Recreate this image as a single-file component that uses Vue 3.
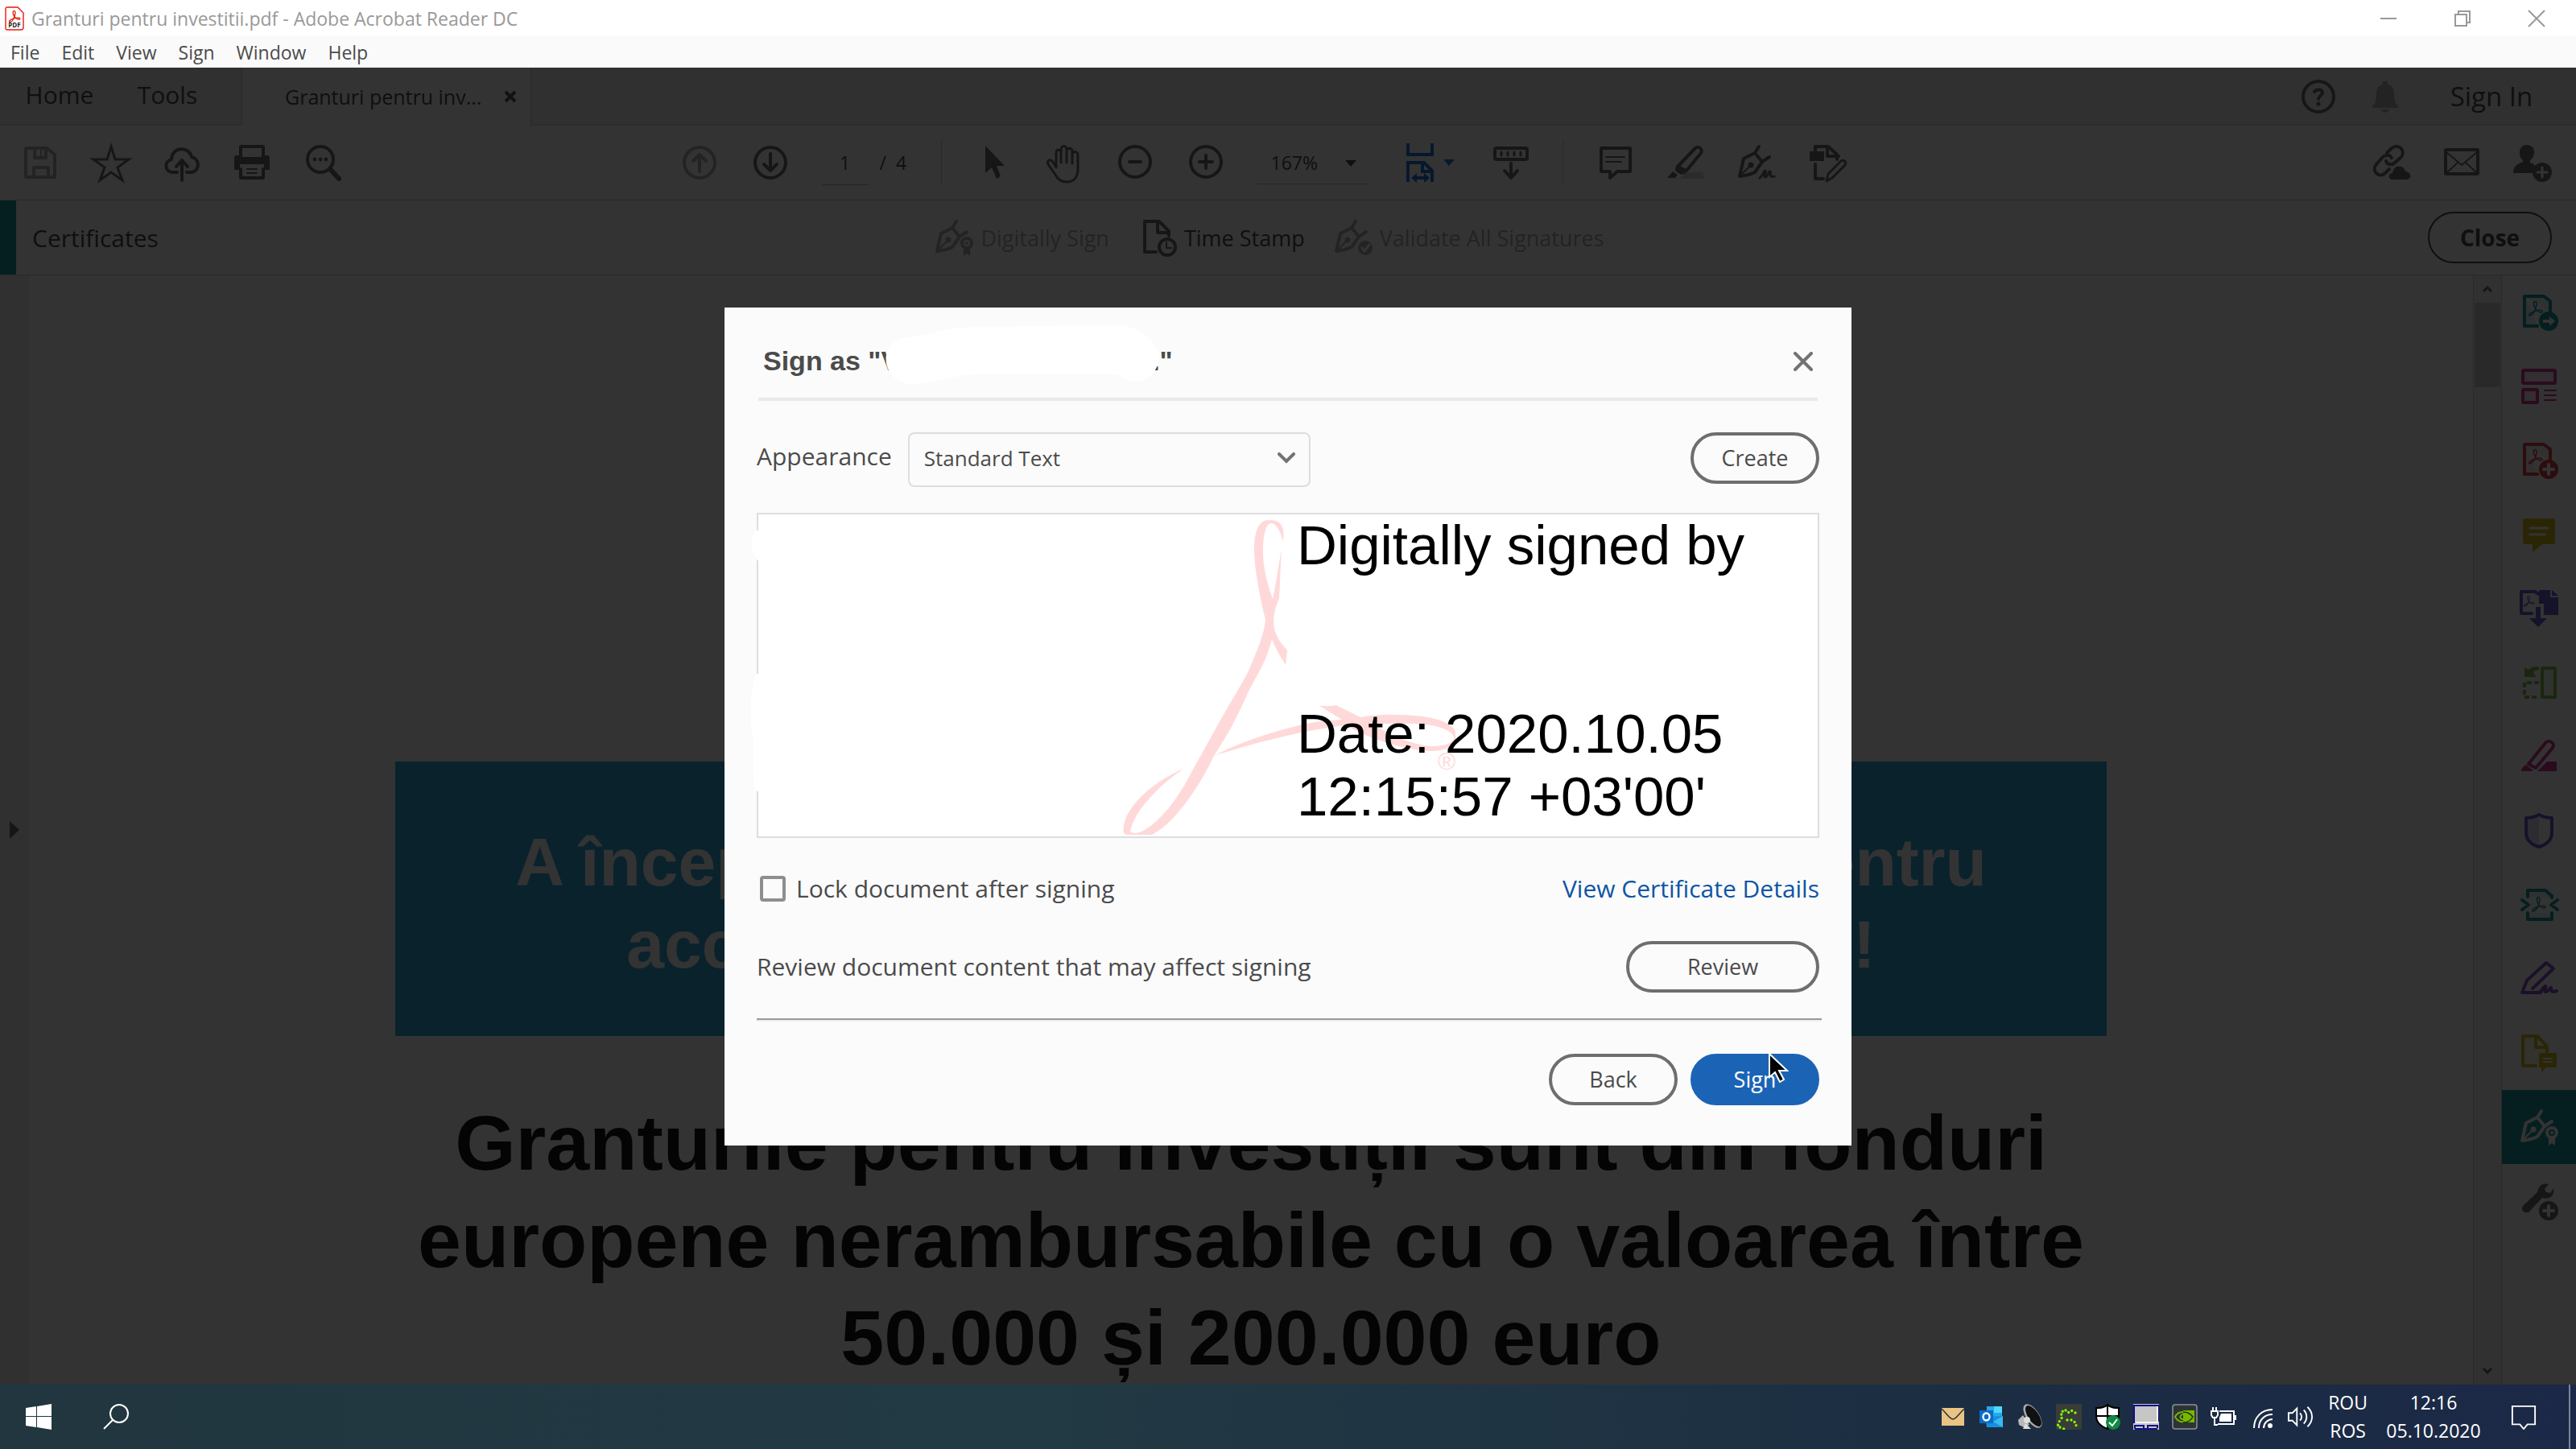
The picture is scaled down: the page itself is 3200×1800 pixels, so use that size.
<!-- PDF reader window with the signing dialog open -->
<template>
  <div class="screen">
    <header class="titlebar">
      <svg class="app-icon" viewBox="0 0 24 30">
        <path d="M3 1h13l7 7v18a3 3 0 0 1-3 3H3a2 2 0 0 1-2-2V3a2 2 0 0 1 2-2z" fill="#fff" stroke="#e8190c" stroke-width="1.4" />
        <path :d="trefoil" transform="translate(5 5) scale(.6)" fill="none" stroke="#e8190c" stroke-width="2.2" />
        <text x="12" y="26" class="pdf-mark">PDF</text>
      </svg>
      <span class="title">Granturi pentru investitii.pdf - Adobe Acrobat Reader DC</span>
      <div class="win-controls">
        <button aria-label="Minimize"><svg viewBox="0 0 22 22"><path d="M1 11h20" /></svg></button>
        <button aria-label="Restore"><svg viewBox="0 0 22 22"><path d="M2 6h14v14H2zM6 6V2h14v14h-4" /></svg></button>
        <button aria-label="Close window"><svg viewBox="0 0 22 22"><path d="M1 1l20 20M21 1L1 21" /></svg></button>
      </div>
    </header>
    <nav class="menubar">
      <button v-for="m in menus" :key="m">{{ m }}</button>
    </nav>

    <main class="app">
      <div class="tabs">
        <button class="nav home">Home</button>
        <button class="nav">Tools</button>
        <div class="tab">
          <span>Granturi pentru inv...</span>
          <button aria-label="Close tab"><svg viewBox="0 0 16 16"><path d="M2 2l12 12M14 2L2 14" /></svg></button>
        </div>
        <div class="account">
          <button aria-label="Help">
            <svg class="ic" viewBox="0 0 48 48">
              <circle cx="24" cy="24" r="19" />
              <path d="M19 18c2-4 10-3 10 1 0 4-5 4-5 8" /><circle class="f" cx="24" cy="33" r="2.6" />
            </svg>
          </button>
          <button class="off" aria-label="Notifications">
            <svg class="ic" viewBox="0 0 48 48">
              <path class="f" d="M21 5h6v4c5 1 8 5 8 10 0 9 1 14 5 16v3H8v-3c4-2 5-7 5-16 0-5 3-9 8-10zM19 40h10c-1 5-9 5-10 0z" />
            </svg>
          </button>
          <button class="nav signin">Sign In</button>
        </div>
      </div>

      <div class="toolbar">
        <div class="group left">
          <button class="off" aria-label="Save">
            <svg class="ic" viewBox="0 0 48 48"><path d="M6 6h26l10 8v28H6zM17 6v12h14V6M16 42V30h18v12" /><path class="thin" d="M25 9v6" /></svg>
          </button>
          <button aria-label="Star">
            <svg class="ic sharp" viewBox="0 0 48 48"><path class="mid" d="M24 4l5 16h17L32 30l6 16-14-10-14 10 6-16L2 20h17z" /></svg>
          </button>
          <button aria-label="Upload">
            <svg class="ic" viewBox="0 0 48 48">
              <path d="M18 36h-6c-10-1-10-14-1-16 0-15 21-18 25-3 10 2 11 17 0 19h-6" /><path d="M24 46V22M17 29l7-8 7 8" />
            </svg>
          </button>
          <button aria-label="Print">
            <svg class="ic" viewBox="0 0 48 48">
              <path d="M9 18V4h28v14M9 32v11h28V32" />
              <path class="f" d="M4 15h4v2h30v-2h4a3 3 0 0 1 3 3v15h-7v-7H8v7H1V18a3 3 0 0 1 3-3z" />
              <path class="thin" d="M17 32h12M17 37h12" />
            </svg>
          </button>
          <button aria-label="Search">
            <svg class="ic" viewBox="0 0 48 48">
              <circle cx="20" cy="20" r="16" /><path class="bold" d="M32 32l11 12" />
              <circle class="f" cx="13" cy="20" r="2.4" /><circle class="f" cx="20" cy="20" r="2.4" /><circle class="f" cx="27" cy="20" r="2.4" />
            </svg>
          </button>
        </div>
        <div class="group center">
          <button class="off" aria-label="Previous page">
            <svg class="ic" viewBox="0 0 48 48"><circle cx="24" cy="24" r="19" /><path d="M24 35V15M16 22l8-8 8 8" /></svg>
          </button>
          <button aria-label="Next page">
            <svg class="ic" viewBox="0 0 48 48"><circle cx="24" cy="24" r="19" /><path d="M24 13v20M16 26l8 8 8-8" /></svg>
          </button>
          <div class="pager">
            <input v-model="page" aria-label="Page number" />
            <span>/&nbsp; 4</span>
          </div>
          <i class="sep"></i>
          <button aria-label="Select">
            <svg class="ic" viewBox="0 0 48 48"><path class="f" d="M14 3l24 25H28l5 13-5 3-6-14-8 7z" /></svg>
          </button>
          <button aria-label="Hand">
            <svg class="ic" viewBox="0 0 48 48">
              <path class="mid" d="M14 30V12c0-5 6-5 6 0v12-16c0-6 7-6 7 0v16-14c0-5 7-5 7 0v15-11c0-5 7-4 7 0v18c0 10-5 16-14 16-7 0-11-3-14-9L4 26c-2-5 3-7 6-3z" />
            </svg>
          </button>
          <button aria-label="Zoom out">
            <svg class="ic" viewBox="0 0 48 48"><circle cx="24" cy="23" r="19" /><path d="M17 23h14" /></svg>
          </button>
          <button aria-label="Zoom in">
            <svg class="ic" viewBox="0 0 48 48"><circle cx="24" cy="23" r="19" /><path d="M16 23h16M24 15v16" /></svg>
          </button>
          <div class="zoom">
            <select aria-label="Zoom level"><option>167%</option></select>
            <svg viewBox="0 0 14 8"><path d="M0 0h14L7 8z" /></svg>
          </div>
          <button class="fit" aria-label="Fit width">
            <svg class="ic sharp" viewBox="0 0 48 48">
              <path d="M8 0v14h30V0M8 48V24h20l10 10v14M26 24v11h12M16 43h14" />
              <path class="f" d="M19 37v12l-7-6zM28 37v12l7-6z" />
            </svg>
            <svg class="caret" viewBox="0 0 14 8"><path d="M0 0h14L7 8z" /></svg>
          </button>
          <button aria-label="Keyboard">
            <svg class="ic" viewBox="0 0 48 48">
              <rect x="4" y="6" width="40" height="14" rx="2" /><path class="mid" d="M12 11v4M20 11v4M28 11v4M36 11v4" />
              <path d="M24 25v17M16 34l8 9 8-9" />
            </svg>
          </button>
          <i class="sep"></i>
          <button aria-label="Comment">
            <svg class="ic" viewBox="0 0 48 48"><path d="M7 6h36v29H27l-9 8v-8H7z" /><path class="thin" d="M13 17h23M13 23h19" /></svg>
          </button>
          <button aria-label="Highlight">
            <svg class="ic" viewBox="0 0 48 48">
              <path class="pale" d="M16 44l8-8h22v8z" />
              <path d="M14 29L35 7c4-5 11 0 8 5L25 34z" /><path class="f" d="M12 27l13 10-7 2-7-5zM2 42l6-7 6 4-3 4H2z" />
            </svg>
          </button>
          <button aria-label="Sign">
            <svg class="ic" viewBox="0 0 48 48">
              <path :d="nib" /><circle class="f" cx="17" cy="27" r="3.5" /><path class="thin" d="M4 40l13-13" />
              <path class="mid" d="M28 43c4-2 5-10 7-9s-3 8 0 8 4-8 6-7-3 8 5 6" />
            </svg>
          </button>
          <button aria-label="Edit">
            <svg class="ic" viewBox="0 0 48 48">
              <path d="M9 10V4h16l11 10v6M24 4v12h14M9 26v18h10" /><path class="f" d="M2 10h18v12H2z" />
              <path class="mid" d="M25 38l16-16c4-2 7 1 5 5L30 43l-7 4z" />
            </svg>
          </button>
        </div>
        <div class="group right">
          <button aria-label="Share link">
            <svg class="ic" viewBox="0 0 48 48">
              <path d="M19 12l6-6c8-6 18 2 12 11l-8 7c-4 4-10 2-11-2" /><path d="M25 18c-2-4-7-4-11-1l-8 9c-7 9 4 18 11 11l5-5" />
              <path class="f" d="M25 45c-5-1-4-8 1-8 1-7 6-10 11-8 3 1 5 4 5 6 8 0 8 9 2 10z" />
            </svg>
          </button>
          <button aria-label="Mail">
            <svg class="ic" viewBox="0 0 48 48"><rect x="4" y="8" width="40" height="30" rx="1" /><path class="thin" d="M5 11l19 16 19-16M5 37l14-13M43 37L29 24" /></svg>
          </button>
          <button aria-label="Add people">
            <svg class="ic" viewBox="0 0 48 48">
              <path class="f" d="M17 2c12 0 11 15 4 19v3c5 2 7 2 6 13H0c0-9 5-11 12-14v-2C6 16 6 2 17 2z" />
              <circle class="f" cx="36" cy="36" r="12" /><path class="inv" d="M30 36h12M36 30v12" />
            </svg>
          </button>
        </div>
      </div>

      <div class="certbar">
        <strong class="cert-title">Certificates</strong>
        <div class="cert-actions">
          <button class="off">
            <svg class="ic" viewBox="0 0 48 48">
              <path :d="nib" /><circle class="f" cx="17" cy="27" r="3.5" /><path class="thin" d="M4 40l13-13" />
              <circle cx="40" cy="31" r="6" /><circle class="f" cx="40" cy="31" r="2" /><path class="f" d="M36 37h8v10l-4-3-4 3z" />
            </svg>
            Digitally Sign
          </button>
          <button>
            <svg class="ic" viewBox="0 0 48 48"><path d="M22 42H8V4h18l12 12v6M24 4v14h14" /><circle cx="36" cy="36" r="10" /><path class="thin" d="M35 30v7h6" /></svg>
            Time Stamp
          </button>
          <button class="off">
            <svg class="ic" viewBox="0 0 48 48">
              <path :d="nib" /><circle class="f" cx="17" cy="27" r="3.5" /><path class="thin" d="M4 40l13-13" />
              <circle class="f" cx="39" cy="37" r="9" /><path class="inv" d="M35 37l3 4 6-8" />
            </svg>
            Validate All Signatures
          </button>
        </div>
        <div class="cert-end"><button class="close-pill">Close</button></div>
      </div>

      <div class="workspace">
        <aside class="rail"><svg viewBox="0 0 12 22"><path d="M0 0l12 11L0 22z" /></svg></aside>
        <article class="document">
          <div class="banner">
            <p class="line wide"><span>A început</span><span>pentru</span></p>
            <p class="line"><span>accesarea</span><span>!</span></p>
          </div>
          <h1>Granturile pentru investiții sunt din fonduri<br />europene nerambursabile cu o valoarea între<br />50.000 și 200.000 euro</h1>
        </article>
        <div class="scroll">
          <svg viewBox="0 0 12 8"><path d="M1 7l5-5 5 5" /></svg>
          <i class="thumb"></i>
          <svg viewBox="0 0 12 8"><path d="M1 1l5 5 5-5" /></svg>
        </div>
        <aside class="tools">
          <button class="teal" aria-label="Export PDF">
            <svg class="ic" viewBox="0 0 48 48">
              <path class="tint" d="M6 4h24l8 6v13M22 41H6V4" /><path class="thin" :d="trefoil" transform="translate(11 10) scale(.75)" />
              <circle class="f" cx="36" cy="35" r="12" /><path class="invf" d="M29 33h8v-4l7 6-7 6v-4h-8z" />
            </svg>
          </button>
          <button class="pink" aria-label="Organize Pages">
            <svg class="ic" viewBox="0 0 48 48">
              <rect class="tint" x="4" y="4" width="40" height="16" rx="1" /><rect class="tint" x="4" y="28" width="18" height="16" rx="1" />
              <path class="thin" d="M31 29h14M31 35h14M31 41h14" />
            </svg>
          </button>
          <button class="red" aria-label="Create PDF">
            <svg class="ic" viewBox="0 0 48 48">
              <path class="tint" d="M6 4h24l8 6v13M22 41H6V4" /><path class="thin" :d="trefoil" transform="translate(11 10) scale(.75)" />
              <circle class="f" cx="36" cy="35" r="12" /><path class="inv wide-inv" d="M30 35h12M36 29v12" />
            </svg>
          </button>
          <button class="yellow" aria-label="Comment tool">
            <svg class="ic" viewBox="0 0 48 48"><path class="f" d="M7 4h34a3 3 0 0 1 3 3v26a3 3 0 0 1-3 3H28l-12 10V36H7a3 3 0 0 1-3-3V7a3 3 0 0 1 3-3z" /><path class="inv" d="M13 16h22M13 24h18" /></svg>
          </button>
          <button class="blue" aria-label="Combine Files">
            <svg class="ic" viewBox="0 0 48 48">
              <path d="M24 6l-5-3H2v27h13" /><path class="thin" :d="trefoil" transform="translate(5 8) scale(.55)" />
              <path class="f" d="M24 1h14v9h10v22H30V18h-6zM40 1l8 7h-8zM20 22h6v14h8L23 47 12 36h8z" />
            </svg>
          </button>
          <button class="green" aria-label="Rotate pages">
            <svg class="ic sharp" viewBox="0 0 48 48">
              <rect class="tint" x="28" y="6" width="16" height="36" rx="1" /><path stroke-dasharray="6 3" d="M24 24H6v18h18" />
              <path class="f" d="M24 4v4c-5 0-7 3-7 3l3 6H6V5l5 3c4-4 8-4 13-4z" />
            </svg>
          </button>
          <button class="pink" aria-label="Redact">
            <svg class="ic" viewBox="0 0 48 48">
              <path d="M11 33L32 7c4-5 13 0 9 6L20 38z" /><path class="f" d="M2 42c0-4 3-6 6-8l9 7-2 1zM22 42l12-12h12v12z" />
            </svg>
          </button>
          <button class="blue" aria-label="Protect">
            <svg class="ic" viewBox="0 0 48 48"><path class="tintf" d="M24 4v40C14 41 8 35 8 26V8z" /><path d="M24 4c5 3 10 4 16 4v18c0 9-6 15-16 18C14 41 8 35 8 26V8c6 0 11-1 16-4z" /></svg>
          </button>
          <button class="teal" aria-label="Compress PDF">
            <svg class="ic" viewBox="0 0 48 48">
              <path class="tint" d="M10 14V6h22l8 7v2M10 34v8h30v-8" /><path class="thin" :d="trefoil" transform="translate(15 14) scale(.75)" />
              <path d="M3 18l8 6-8 6M47 18l-8 6 8 6" />
            </svg>
          </button>
          <button class="violet" aria-label="Fill and Sign">
            <svg class="ic" viewBox="0 0 48 48">
              <path d="M26 41H3l6-15L33 4l9 7-26 25" /><path d="M24 41c5-2 6-9 8-8s-3 8 1 7 5-6 6-5-2 7 7 4" />
            </svg>
          </button>
          <button class="yellow" aria-label="Send for comments">
            <svg class="ic" viewBox="0 0 48 48">
              <path class="tint" d="M20 40H4V3h18l12 13v6M20 3v14h14" /><path class="f" d="M24 24h22v18H33l-6 6v-6h-3z" /><path class="inv slim" d="M30 31h10M30 35h10" />
            </svg>
          </button>
          <button class="active" aria-label="Certificates tool">
            <svg class="ic" viewBox="0 0 48 48">
              <path :d="nib" /><circle class="f" cx="17" cy="27" r="3.5" /><path class="thin" d="M4 40l13-13" />
              <circle cx="40" cy="31" r="6" /><circle class="f" cx="40" cy="31" r="2" /><path class="f" d="M36 37h8v10l-4-3-4 3z" />
            </svg>
          </button>
          <button aria-label="More tools">
            <svg class="ic" viewBox="0 0 48 48">
              <path class="f" d="M22 13c1-9 8-12 14-10l-5 6 2 4 5 1 4-6c2 9-5 15-14 12L14 35c-4 7-14 2-10-5z" />
              <circle class="f" cx="36" cy="36" r="12" /><path class="inv wide-inv" d="M30 36h12M36 30v12" />
            </svg>
          </button>
        </aside>
      </div>

      <div class="overlay">
        <section class="dialog" role="dialog" aria-labelledby="dlg-title">
          <div class="dlg-head">
            <h2 id="dlg-title">
              <span>Sign as "V</span>
              <svg class="smudge" viewBox="0 0 342 73"><path d="M30 15C60 12 70 4 110 2L290 0c20 0 48 18 51 36 2 20-16 34-30 34-12 0-18-9-26-9H110C80 63 60 73 35 73-5 73-12 18 30 15z" /></svg>
              <span>."</span>
            </h2>
            <button aria-label="Close dialog"><svg viewBox="0 0 24 24"><path d="M2 2l20 20M22 2L2 22" /></svg></button>
          </div>
          <div class="row appearance">
            <label for="appearance">Appearance</label>
            <div class="select">
              <select id="appearance" v-model="appearance"><option>Standard Text</option></select>
              <svg viewBox="0 0 22 14"><path d="M2 2l9 9 9-9" /></svg>
            </div>
            <button class="pill push">Create</button>
          </div>
          <div class="preview">
            <svg class="logo" viewBox="0 0 1320 404">
              <g fill="#ffd9d9">
                <path fill-rule="evenodd" d="M652 46C650 80 650 95 649 107C642 120 640 140 645 150C649 160 655 166 659 171L657 189C650 178 644 168 640 157C632 188 622 200 610 224C596 256 586 274 568 302C550 340 520 385 491 400H462C455 400 455 396 456 388C460 365 490 335 530 318C498 340 468 372 464 396C468 399 474 398 478 396C500 385 520 358 532 337L568 272C590 232 602 215 612 194C622 170 630 152 632 133C626 108 618 70 618 46C618 22 624 9 636 9C652 9 656 16 654 36C650 20 644 13 639 13C633 13 629 26 629 48C629 70 635 90 641 107C646 85 648 65 652 46Z" />
                <path fill-rule="evenodd" d="M568 302C600 285 640 272 678 263C695 259 712 258 727 257L698 239C706 241 714 240 720 239L750 254C770 250 800 250 828 253C850 256 866 264 868 272V284C864 292 852 296 838 296C800 294 760 280 732 264C680 270 620 285 568 302ZM764 262C790 278 815 288 838 290C858 290 868 284 866 278C862 268 840 263 820 262Z" />
              </g>
              <text x="846" y="319" class="reg">®</text>
              <path fill="#fff" d="M0 22C-9 32-9 48 2 60h8V22zM0 200c-9 18-9 60-4 84-1 20-1 50 3 62h12V200z" />
            </svg>
            <p class="stamp">Digitally signed by<br /><br /><br />Date: 2020.10.05<br />12:15:57 +03'00'</p>
          </div>
          <div class="row lock">
            <input id="lock" v-model="lockDoc" type="checkbox" />
            <label for="lock">Lock document after signing</label>
            <a class="push" href="#">View Certificate Details</a>
          </div>
          <div class="row review">
            <span>Review document content that may affect signing</span>
            <button class="pill push big">Review</button>
          </div>
          <hr />
          <div class="row actions">
            <button class="pill push">Back</button>
            <button class="pill primary">Sign<svg class="pointer" viewBox="0 0 26 38"><path d="M2 2v29l7-6 6 12 5-3-6-11h10z" /></svg></button>
          </div>
        </section>
      </div>
    </main>

    <footer class="taskbar">
      <button aria-label="Start"><svg viewBox="0 0 32 32"><path fill="#fff" d="M0 5l13-2v12H0zM14 3l18-3v15H14zM0 16h13v13L0 27zM14 16h18v16l-18-3z" /></svg></button>
      <button aria-label="Search Windows"><svg viewBox="0 0 32 32" class="line-ic"><circle cx="20" cy="12" r="11" /><path d="M12 20L1 31" /></svg></button>
      <div class="tray">
        <svg viewBox="0 0 32 32"><path fill="#ebc383" d="M2 5h28v22H2z" /><path d="M2 6c8 8 10 13 14 13S22 14 30 6" fill="none" stroke="#263646" stroke-width="1.5" /></svg>
        <svg viewBox="0 0 32 32">
          <path fill="#28a8ea" d="M10 3h19v22H10z" /><path fill="#50d9ff" d="M19 3h10v8H19z" /><path fill="#1490df" d="M8 16l22-1v14H10z" /><path fill="#3cb8f0" d="M30 15v14L18 22z" />
          <path fill="#0a6cc8" d="M1 8h17v16H1z" /><ellipse cx="9.5" cy="16" rx="4" ry="4.5" fill="none" stroke="#fff" stroke-width="2.4" />
        </svg>
        <svg viewBox="0 0 32 32">
          <path fill="#b8b8b8" d="M1 20l6-6 8 12-7 3-6-3z" /><ellipse cx="19" cy="15" rx="8" ry="17" transform="rotate(-34 19 15)" fill="#aaa" />
          <ellipse cx="20" cy="15" rx="6.5" ry="15" transform="rotate(-34 20 15)" fill="#111" /><circle cx="12" cy="20" r="4" fill="#ddd" /><path fill="#ddd" d="M7 31l3-7 7 7z" />
        </svg>
        <svg viewBox="0 0 32 32"><path fill="#3a3c3a" d="M0 0h32v32H0z" /><path d="M24 11l-5-3-4 3-4-4-5 4 2 5-4 6-2 6 6 2 4 2M14 20h6l5 4v7" fill="none" stroke="#7fff00" stroke-width="3.4" stroke-linecap="round" stroke-dasharray="0 5" /></svg>
        <svg viewBox="0 0 32 32">
          <path d="M16 1c4 4 9 4 14 4v10c0 8-6 13-14 16C8 28 2 23 2 15V5c5 0 10 0 14-4z" fill="#fff" stroke="#000" stroke-width="2" /><path d="M16 2v28M2 15h28" stroke="#000" stroke-width="2" />
          <circle cx="23" cy="23" r="9" fill="#0f8a42" /><path d="M18 23l4 4 6-8" fill="none" stroke="#fff" stroke-width="2" />
        </svg>
        <svg viewBox="0 0 32 32"><path fill="#c6c6c6" d="M0 0h32v32H0z" /><path fill="none" stroke="#10108a" stroke-width="2" d="M1 24V2h30v20M2 31v-4h11v3M18 30v-3h12v3M2 31h28" /><path fill="none" stroke="#f4f4f4" stroke-width="2" d="M30 3v20H3" /></svg>
        <svg viewBox="0 0 32 32">
          <rect x="1" y="1" width="30" height="30" rx="3" fill="#2e3436" stroke="#8c9296" stroke-width="1.5" /><path fill="#76b900" d="M14 8h14v15H14z" />
          <path d="M14 10C8 10 5 14 4 16c3 6 9 8 15 5 3-2 5-4 5-5-3-4-7-5-11-3s-3 6 1 6 5-3 2-4" fill="none" stroke="#76b900" stroke-width="1.8" /><path d="M14 10c5 0 9 2 12 6-2 4-6 7-12 7" fill="none" stroke="#23300a" stroke-width="1.5" />
        </svg>
        <svg viewBox="0 0 32 32" class="line-ic"><path d="M3 4v5M7 4v5M1 9h8v5l-2 3H3l-2-3zM5 17v9h4M11 9h18v16H9M31 14v6" /><path fill="#fff" stroke="none" d="M13 12h13v10H11v-5z" /></svg>
        <svg viewBox="0 0 32 32" class="line-ic"><path d="M6 30C6 17 15 7 29 7M12 30c0-10 7-17 17-17M18 30c0-6 5-11 11-11" /><circle cx="26" cy="27" r="3" fill="#fff" stroke="none" /></svg>
        <svg viewBox="0 0 34 32" class="line-ic"><path d="M1 11h5l6-6v22l-6-6H1zM16 11c3 3 3 7 0 10M21 7c5 5 5 13 0 18M26 3c8 8 8 18 0 26" /></svg>
      </div>
      <div class="lang"><span>ROU</span><span>ROS</span></div>
      <div class="clock"><span>12:16</span><span>05.10.2020</span></div>
      <button class="notes" aria-label="Notifications panel"><svg viewBox="0 0 34 34" class="line-ic"><path d="M2 3h30v24H22l-5 6-5-6H2z" /></svg></button>
      <i class="peek"></i>
    </footer>
  </div>
</template>

<script setup>
import { ref } from 'vue';

const menus = ['File', 'Edit', 'View', 'Sign', 'Window', 'Help'];
const page = ref('1');
const appearance = ref('Standard Text');
const lockDoc = ref(false);

// shapes used by several icons
const trefoil = 'M11 1c4 0 2 8 0 13-2 6-6 10-9 10s0-5 7-7 14-3 14 0-8 2-12-5-3-11 0-11z';
const nib = 'M27 4l-5 8L8 19 3 41c8-1 15-3 19-5l9-13 9-6M22 12l9 11';
</script>

<style>
body {
  margin: 0;
}
</style>

<style scoped>
.screen {
  display: flex;
  flex-direction: column;
  height: 100vh;
  overflow: hidden;
  font-family: "Open Sans", "Noto Sans", sans-serif;
  color: #4b4b4b;
}
button, select, input {
  font: inherit;
  color: inherit;
  background: none;
  border: 0;
  padding: 0;
  margin: 0;
}
button {
  display: flex;
  align-items: center;
  justify-content: center;
  flex: none;
}
svg {
  display: block;
  flex: none;
}
p, h1, h2 {
  margin: 0;
}

/* title and menu */
.titlebar {
  display: flex;
  align-items: center;
  height: 45px;
  padding-left: 6px;
  background: #fff;
  color: #999;
  font-size: 23px;
}
.app-icon {
  width: 24px;
  height: 30px;
  margin-right: 9px;
}
.pdf-mark {
  font: bold 8px "Open Sans", sans-serif;
  text-anchor: middle;
  fill: #222;
}
.win-controls {
  display: flex;
  margin-left: auto;
  padding-right: 3px;
}
.win-controls button {
  width: 92px;
  height: 42px;
}
.win-controls svg {
  width: 22px;
  fill: none;
  stroke: #999;
  stroke-width: 2;
}
.menubar {
  display: flex;
  gap: 27px;
  height: 39px;
  padding-left: 13px;
  background: #fafafa;
  font-size: 23px;
}

/* reader window */
.app {
  position: relative;
  flex: 1;
  min-height: 0;
  display: flex;
  flex-direction: column;
  background: #fff;
}
.ic {
  width: 48px;
  height: 48px;
  fill: none;
  stroke: currentColor;
  stroke-width: 4;
  stroke-linecap: round;
  stroke-linejoin: round;
  overflow: visible;
}
.sharp {
  stroke-linecap: butt;
  stroke-linejoin: miter;
}
.ic .f {
  fill: currentColor;
  stroke: none;
}
.ic .thin {
  stroke-width: 2;
}
.ic .mid {
  stroke-width: 3;
}
.ic .bold {
  stroke-width: 6;
}
.ic .inv {
  stroke: #fff;
  stroke-width: 3;
}
.ic .wide-inv {
  stroke-width: 4;
}
.ic .slim {
  stroke-width: 2;
}
.ic .invf {
  fill: #fff;
  stroke: none;
}
.ic .pale {
  fill: #d8d8d8;
  stroke: none;
}
.ic .tint {
  fill: currentColor;
  fill-opacity: .12;
}
.ic .tintf {
  fill: currentColor;
  fill-opacity: .2;
  stroke: none;
}
.tabs {
  display: flex;
  height: 71px;
  background: #f0f0f0;
  border-bottom: 1px solid #cdcdcd;
}
.nav {
  height: 66px;
  width: 128px;
  font-size: 30px;
}
.home {
  margin-left: 10px;
  margin-right: 6px;
}
.tab {
  display: flex;
  align-items: center;
  justify-content: space-between;
  width: 360px;
  height: 72px;
  margin-left: 28px;
  padding: 0 17px 0 53px;
  box-sizing: border-box;
  background: #fff;
  border: solid #cdcdcd;
  border-width: 0 1px;
  font-size: 25px;
}
.tab svg {
  width: 16px;
  fill: none;
  stroke: #5a5a5a;
  stroke-width: 4;
}
.account {
  display: flex;
  align-items: center;
  gap: 35px;
  margin-left: auto;
  padding-right: 41px;
  color: #6e6e6e;
}
.signin {
  color: #4b4b4b;
  margin-left: 9px;
  font-size: 33px;
}
.off {
  color: #afafaf !important;
}
.toolbar, .certbar {
  display: grid;
  grid-template-columns: 1fr auto 1fr;
  align-items: center;
  height: 92px;
  border-bottom: 1px solid #cdcdcd;
}
.group {
  display: flex;
  align-items: center;
  gap: 40px;
  color: #6e6e6e;
}
.left {
  padding-left: 26px;
}
.center {
  padding-right: 62px;
}
.right {
  justify-content: flex-end;
  padding-right: 30px;
}
.sep {
  width: 1px;
  height: 56px;
  background: #cdcdcd;
}
.pager {
  display: flex;
  align-items: center;
  gap: 14px;
  width: 108px;
  font-size: 23px;
  color: #4b4b4b;
}
.pager span {
  white-space: nowrap;
}
.pager input {
  width: 58px;
  height: 54px;
  text-align: center;
  border-bottom: 1px solid #bbb;
}
.zoom {
  position: relative;
  display: flex;
  width: 139px;
  font-size: 23px;
  color: #4b4b4b;
}
.zoom select {
  appearance: none;
  width: 100%;
  height: 54px;
  padding-left: 17px;
  border-bottom: 1px solid #bbb;
}
.zoom svg {
  position: absolute;
  right: 16px;
  top: 24px;
  width: 14px;
  fill: #4b4b4b;
}
.fit {
  gap: 4px;
  padding-right: 6px;
  color: #1e78e1;
}
.caret {
  width: 14px;
  fill: #1e78e1;
}
.cert-title {
  align-self: stretch;
  display: flex;
  align-items: center;
  padding-left: 20px;
  border-left: 20px solid #199ba0;
  font-weight: 400;
  font-size: 30px;
}
.cert-actions {
  display: flex;
  gap: 36px;
  padding-right: 46px;
  font-size: 27px;
}
.cert-actions button {
  gap: 9px;
}
.cert-actions svg {
  color: #6e6e6e;
}
.cert-actions .off svg {
  color: #afafaf;
}
.cert-end {
  display: flex;
  justify-content: flex-end;
  padding-right: 30px;
}
.close-pill {
  width: 154px;
  height: 64px;
  border: 2px solid #4b4b4b;
  border-radius: 32px;
  font-weight: 700;
  font-size: 28px;
}
.workspace {
  flex: 1;
  min-height: 0;
  display: flex;
}
.rail {
  width: 36px;
  display: flex;
  align-items: center;
  justify-content: center;
  background: #f0f0f0;
}
.rail svg {
  width: 12px;
  fill: #6e6e6e;
}
.document {
  flex: 1;
  overflow: hidden;
  padding-top: 604px;
  font-family: "Liberation Sans", Arial, sans-serif;
  font-weight: 700;
  text-align: center;
}
.banner {
  display: flex;
  flex-direction: column;
  align-items: center;
  justify-content: center;
  box-sizing: border-box;
  width: 70%;
  height: 341px;
  margin: 0 auto 72px;
  padding-top: 10px;
  background: #32aadc;
  color: #fff;
  font-size: 84px;
  line-height: 102px;
}
.line {
  display: flex;
  justify-content: space-between;
  width: 73%;
}
.wide {
  width: 86%;
}
h1 {
  color: #141414;
  font-size: 97px;
  line-height: 121px;
  white-space: nowrap;
}
.scroll {
  width: 34px;
  display: flex;
  flex-direction: column;
  align-items: center;
  background: #f5f5f5;
  border: solid #cdcdcd;
  border-width: 0 1px;
}
.scroll svg {
  width: 12px;
  margin: 13px 0;
  fill: none;
  stroke: #6e6e6e;
  stroke-width: 3;
}
.thumb {
  width: 32px;
  height: 105px;
  margin-bottom: auto;
  background: #cdcdcd;
}
.tools {
  width: 92px;
  color: #6e6e6e;
}
.tools button {
  width: 92px;
  height: 92px;
}
.tools .teal { color: #19969b; }
.tools .pink { color: #d23791; }
.tools .red { color: #dc4146; }
.tools .yellow { color: #d2be19; }
.tools .blue { color: #645fd2; }
.tools .green { color: #82be4b; }
.tools .violet { color: #8c50cd; }
.tools .active {
  color: #fff;
  background: #199ba0;
}

/* dimmed layer and dialog */
.overlay {
  position: absolute;
  inset: 0;
  display: flex;
  align-items: center;
  justify-content: center;
  background: rgba(0, 0, 0, .8);
}
.dialog {
  width: 1400px;
  box-sizing: border-box;
  padding: 22px 40px 50px;
  background: #fbfbfb;
  font-size: 30px;
}
.dlg-head {
  display: flex;
  align-items: center;
  justify-content: space-between;
  height: 90px;
  margin: 0 2px;
  padding: 0 6px;
  border-bottom: 4px solid #e9e9e9;
}
.dlg-head h2 {
  display: flex;
  align-items: center;
  font: bold 34px "Liberation Sans", Arial, sans-serif;
}
.smudge {
  position: relative;
  width: 342px;
  height: 73px;
  margin: 0 -10px 16px -18px;
  fill: #fff;
}
.dlg-head button svg {
  width: 24px;
  fill: none;
  stroke: #737373;
  stroke-width: 4;
  stroke-linecap: round;
}
.row {
  display: flex;
  align-items: center;
}
.push {
  margin-left: auto;
}
.appearance {
  align-items: flex-start;
  gap: 20px;
  margin-top: 39px;
  height: 100px;
}
.appearance label {
  line-height: 60px;
}
.select {
  position: relative;
}
.select select {
  appearance: none;
  width: 500px;
  height: 68px;
  padding: 0 18px 4px;
  border: 2px solid #ddd;
  border-radius: 8px;
  font-size: 26px;
}
.select svg {
  position: absolute;
  right: 19px;
  top: 25px;
  width: 22px;
  fill: none;
  stroke: #737373;
  stroke-width: 4;
  stroke-linecap: round;
}
.pill {
  width: 160px;
  height: 64px;
  border: 4px solid #6e6e6e;
  border-radius: 32px;
  font-size: 27px;
}
.big {
  width: 240px;
}
.primary {
  position: relative;
  border-color: #1b64b5;
  background: #1b64b5;
  color: #fff;
}
.pointer {
  position: absolute;
  left: 92px;
  top: -6px;
  width: 26px;
  fill: #000;
  stroke: #fff;
  stroke-width: 2;
}
.preview {
  position: relative;
  height: 400px;
  background: #fff;
  border: 2px solid #ddd;
}
.logo {
  position: absolute;
  inset: -2px;
  overflow: visible;
}
.reg {
  font: 30px "Liberation Sans", sans-serif;
  fill: #ffd9d9;
}
.stamp {
  position: relative;
  padding-left: 669px;
  font: 69px/78px "Liberation Sans", Arial, sans-serif;
  color: #000;
}
.lock {
  height: 126px;
  gap: 13px;
}
.lock input {
  appearance: none;
  width: 32px;
  height: 32px;
  margin-left: 4px;
  border: 4px solid #8e8e8e;
  border-radius: 4px;
}
.lock a {
  color: #0d55a5;
  text-decoration: none;
}
.review {
  height: 68px;
}
hr {
  margin: 30px -3px 40px 0;
  border: solid;
  border-width: 2px 0;
  border-color: #999 #eee #eee #999;
}
.actions {
  gap: 16px;
}

/* taskbar */
.taskbar {
  display: flex;
  align-items: center;
  height: 80px;
  background: linear-gradient(90deg, #21363f, #223a44 40%, #1c2e42 75%, #1b2847);
  color: #fff;
  font-size: 23px;
}
.taskbar button {
  width: 96px;
  height: 80px;
}
.taskbar button svg {
  width: 32px;
}
.line-ic {
  fill: none;
  stroke: #fff;
  stroke-width: 2;
}
.tray {
  display: flex;
  gap: 16px;
  margin-left: auto;
}
.tray svg {
  width: 32px;
  height: 32px;
}
.lang, .clock {
  display: flex;
  flex-direction: column;
  align-items: center;
  line-height: 35px;
}
.lang {
  margin: 0 22px 0 18px;
}
.clock {
  width: 120px;
}
.taskbar .notes {
  margin-left: 2px;
  width: 100px;
}
.peek {
  width: 2px;
  height: 80px;
  margin: 0 7px 0 6px;
  background: #7c8494;
}
</style>
